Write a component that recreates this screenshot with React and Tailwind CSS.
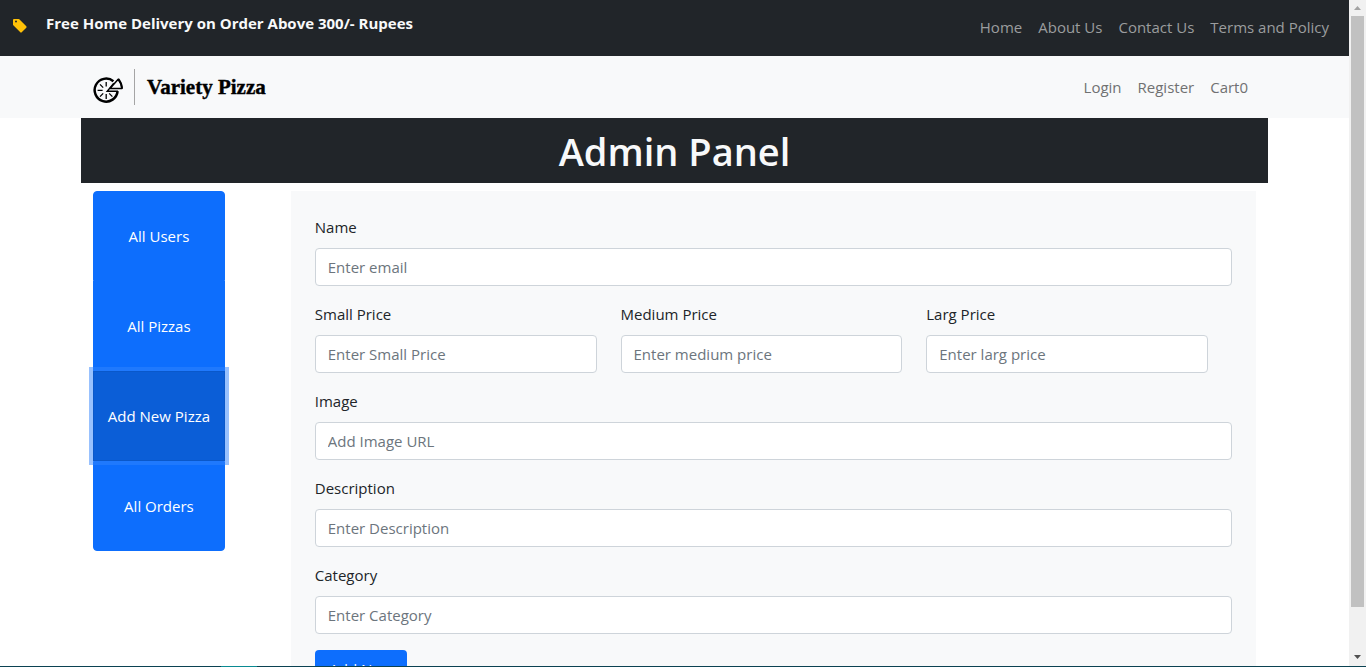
const navLinks = ["Home", "About Us", "Contact Us", "Terms and Policy"];
const accountLinks = ["Login", "Register", "Cart0"];
const adminSections = ["All Users", "All Pizzas", "Add New Pizza", "All Orders"];
const activeSection = "Add New Pizza";

function Field({ id, label, placeholder }) {
  return (
    <div className="min-w-0">
      <label htmlFor={id} className="mb-2 block leading-[25px]">
        {label}
      </label>
      <input
        id={id}
        type="text"
        placeholder={placeholder}
        className="block h-[38px] w-full rounded border border-[#ced4da] bg-white px-3 text-[#212529] placeholder:text-[#6c757d] placeholder:opacity-100"
      />
    </div>
  );
}

function TagIcon() {
  return (
    <svg viewBox="0 0 16 16" className="mt-1.5 size-4 fill-[#ffc107]" aria-hidden="true">
      <path d="M2 1a1 1 0 0 0-1 1v4.586a1 1 0 0 0 .293.707l7 7a1 1 0 0 0 1.414 0l4.586-4.586a1 1 0 0 0 0-1.414l-7-7A1 1 0 0 0 6.586 1zm3 2.600a1 1 0 1 1-2 0 1 1 0 0 1 2 0" />
    </svg>
  );
}

function PizzaLogo() {
  return (
    <svg viewBox="0 0 30 28" className="h-7 w-[30px]" fill="none" stroke="#000" aria-hidden="true">
      <path d="M20.4 5.2A11.500 11.500 0 1 0 24.600 15.200" strokeWidth="2.500" />
      <path d="M25 15.200H14.200L20.800 7.200" strokeWidth="1.400" />
      <path d="M13.200 6v4.600M13.200 18v5M4.600 14.400h5M7 8.400l3.200 3.200M7 20.600l3.200-3.200M19.400 20.600l-3.200-3.200" strokeWidth="1.300" />
      <path d="M17 12.400 25.200 3.200Q28.400 7 29 12.400Z" strokeWidth="1.500" strokeLinejoin="round" />
      <path d="M25.200 3Q28.600 6.800 29 12.600" strokeWidth="2" />
    </svg>
  );
}

function ScrollRail() {
  return (
    <div className="flex w-[17px] shrink-0 flex-col items-center bg-[#f1f1f1]" aria-hidden="true">
      <svg viewBox="0 0 17 16" className="h-4 w-[17px] shrink-0 fill-[#a3a3a3]">
        <path d="M8.5 6 12 10H5Z" />
      </svg>
      <div className="w-[13px] grow-[591] bg-[#c1c1c1]" />
      <div className="grow-[43]" />
      <svg viewBox="0 0 17 16" className="h-4 w-[17px] shrink-0 fill-[#505050]">
        <path d="M5 5h7L8.500 9Z" />
      </svg>
    </div>
  );
}

export default function App() {
  return (
    <div className="flex h-screen flex-col bg-white font-['Open_Sans',sans-serif] text-[15px] leading-6 text-[#212529]">
      <div className="flex min-h-0 flex-1">
        <div className="min-w-0 flex-1 overflow-hidden">
          <header className="flex h-14 items-center justify-between bg-[#212529] pr-5 pl-3">
            <div className="flex items-center gap-[18px] pb-2.5 font-bold text-[#f8f9fa]">
              <TagIcon />
              <p>Free Home Delivery on Order Above 300/- Rupees</p>
            </div>
            <nav className="flex gap-4 pb-0.5 text-[#9b9d9e]">
              {navLinks.map((link) => (
                <a key={link} href="#">{link}</a>
              ))}
            </nav>
          </header>

          <div className="bg-[#f8f9fa]">
            <div className="mx-auto flex h-[62px] w-[88%] items-center justify-between pr-5 pl-3">
              <a href="#" className="flex items-center">
                <span className="pt-1.5"><PizzaLogo /></span>
                <span className="mr-3 ml-[11px] h-9 w-px bg-[#a5a5a5]" />
                <span className="font-['Liberation_Serif',serif] text-[21px] font-bold text-black [-webkit-text-stroke:0.4px_black]">
                  Variety Pizza
                </span>
              </a>
              <nav className="flex gap-4 text-[#707172]">
                {accountLinks.map((link) => (
                  <a key={link} href="#">{link}</a>
                ))}
              </nav>
            </div>
          </div>

          <main className="mx-auto w-[88%]">
            <h1 className="mb-2 bg-[#212529] pt-[9px] pb-2 text-center text-[38px] leading-[48px] font-semibold text-[#f8f9fa]">
              Admin Panel
            </h1>
            <div className="grid grid-cols-12">
              <div className="col-span-2 px-3">
                <div className="inline-flex w-[132px] flex-col text-white">
                  {adminSections.map((section) => (
                    <button
                      key={section}
                      type="button"
                      aria-pressed={section === activeSection}
                      className="h-[90px] border border-[#0d6efd] bg-[#0d6efd] first:rounded-t last:rounded-b aria-pressed:z-10 aria-pressed:border-[#0a58ca] aria-pressed:bg-[#0b5ed7] aria-pressed:shadow-[0_0_0_4px_rgba(49,132,253,0.5)]"
                    >
                      {section}
                    </button>
                  ))}
                </div>
              </div>
              <div className="col-span-10 px-3">
                <form className="flex flex-col gap-4 bg-[#f8f9fa] p-6">
                  <Field id="name" label="Name" placeholder="Enter email" />
                  <div className="grid grid-cols-3 gap-6 pr-6">
                    <Field id="small-price" label="Small Price" placeholder="Enter Small Price" />
                    <Field id="medium-price" label="Medium Price" placeholder="Enter medium price" />
                    <Field id="large-price" label="Larg Price" placeholder="Enter larg price" />
                  </div>
                  <Field id="image" label="Image" placeholder="Add Image URL" />
                  <Field id="description" label="Description" placeholder="Enter Description" />
                  <Field id="category" label="Category" placeholder="Enter Category" />
                  <button type="submit" className="h-[38px] w-[92px] rounded bg-[#0d6efd] text-white">
                    Add New
                  </button>
                </form>
              </div>
            </div>
          </main>
        </div>
        <ScrollRail />
      </div>
      <div className="flex h-px shrink-0 bg-[#0b4252]">
        <div className="ml-[221px] w-9 bg-[#0a8a92]" />
      </div>
    </div>
  );
}
